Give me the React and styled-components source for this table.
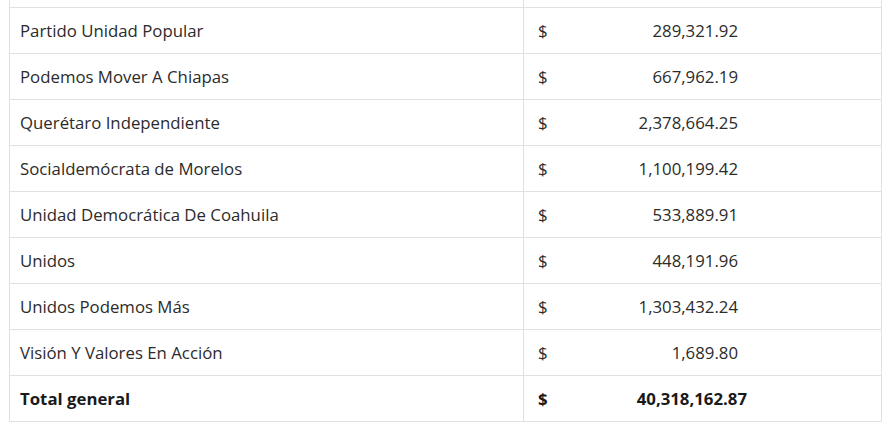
import React from 'react';
import styled, { createGlobalStyle } from 'styled-components';

const GlobalStyle = createGlobalStyle`
  html, body {
    margin: 0;
    padding: 0;
    background: #ffffff;
    overflow: hidden;
  }
`;

const Page = styled.div`
  padding: 0 10px 0 9px;
  margin-top: -39px;
  font-family: 'Open Sans', 'Noto Sans', sans-serif;
  font-size: 16.8px;
  color: #2b2b2b;
`;

const Table = styled.table`
  width: 873px;
  border-collapse: collapse;
  table-layout: fixed;
`;

const Row = styled.tr`
  height: 46px;
  font-weight: ${(props) => (props.$total ? 700 : 400)};
  color: ${(props) => (props.$total ? '#1a1a1a' : '#2b2b2b')};
`;

const NameCell = styled.td`
  width: 514px;
  border: 1px solid #e1e1e1;
  padding: 0 0 0 10px;
  box-sizing: border-box;
  white-space: nowrap;
`;

const AmountCell = styled.td`
  border: 1px solid #e1e1e1;
  padding: 0 0 0 14px;
  white-space: nowrap;
`;

const Amount = styled.div`
  display: flex;
  align-items: center;
`;

const Currency = styled.span`
  width: ${(props) => props.$width}px;
`;

const Value = styled.span`
  width: ${(props) => props.$width}px;
  text-align: right;
`;

const rows = [
  ['Partido Unidad Popular', '289,321.92'],
  ['Podemos Mover A Chiapas', '667,962.19'],
  ['Querétaro Independiente', '2,378,664.25'],
  ['Socialdemócrata de Morelos', '1,100,199.42'],
  ['Unidad Democrática De Coahuila', '533,889.91'],
  ['Unidos', '448,191.96'],
  ['Unidos Podemos Más', '1,303,432.24'],
  ['Visión Y Valores En Acción', '1,689.80'],
];

const App = () => {
  return (
    <>
      <GlobalStyle />
      <Page>
        <Table>
          <tbody>
            <Row>
              <NameCell />
              <AmountCell />
            </Row>
            {rows.map(([name, value]) => (
              <Row key={name}>
                <NameCell>{name}</NameCell>
                <AmountCell>
                  <Amount>
                    <Currency $width={20}>$</Currency>
                    <Value $width={180}>{value}</Value>
                  </Amount>
                </AmountCell>
              </Row>
            ))}
            <Row $total>
              <NameCell>Total general</NameCell>
              <AmountCell>
                <Amount>
                  <Currency $width={20}>$</Currency>
                  <Value $width={189}>40,318,162.87</Value>
                </Amount>
              </AmountCell>
            </Row>
          </tbody>
        </Table>
      </Page>
    </>
  );
};

export default App;
